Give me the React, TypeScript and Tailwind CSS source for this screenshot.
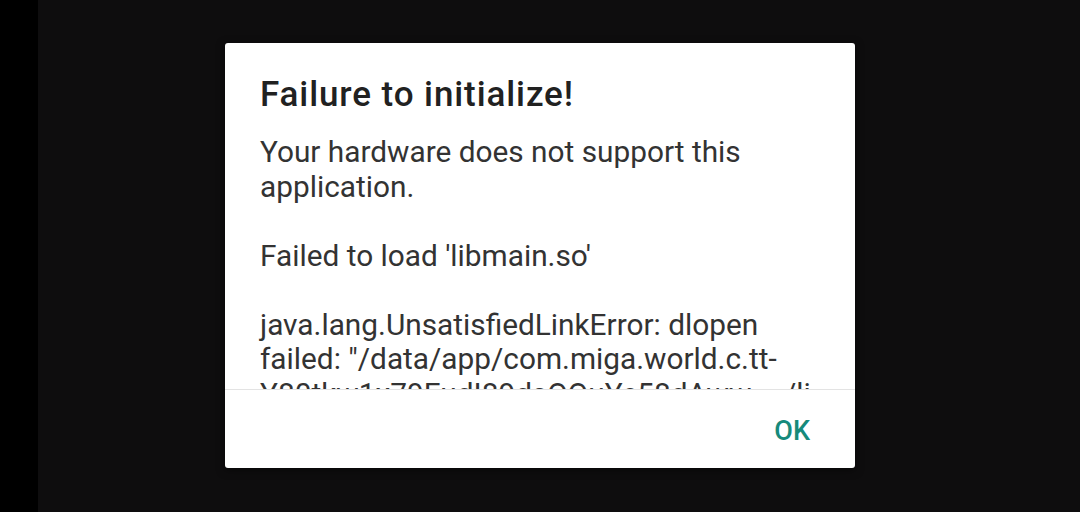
import React from 'react';

const App: React.FC = () => {
    return (
        <div className="flex w-[1080px] h-[512px] overflow-hidden bg-[#0e0d0e]" style={{ fontFamily: 'Roboto, "Noto Sans", sans-serif' }}>
            {/* left edge */}
            <div className="w-[38px] h-full bg-black shrink-0"></div>

            {/* Screen */}
            <div className="flex-1 pl-[187px] pt-[43px]">
                {/* Dialog */}
                <div className="w-[630px] h-[425px] bg-white rounded-[3px] flex flex-col shadow-[0_2px_8px_rgba(0,0,0,0.5)]">
                    {/* Scroll area */}
                    <div className="h-[346px] overflow-hidden px-[35px] pt-[32px]">
                        <h1 className="text-[35px] leading-[40px] font-medium tracking-[0.9px] text-[#212121]">
                            Failure to initialize!
                        </h1>
                        <div className="mt-[20px] text-[29.8px] leading-[34.5px] text-[#333333] break-words">
                            <p>Your hardware does not support this application.</p>
                            <p className="mt-[34.5px]">Failed to load 'libmain.so'</p>
                            <p className="mt-[34.5px]">
                                java.lang.UnsatisfiedLinkError: dlopen failed: "/data/app/com.miga.world.c.tt-Y80tkw1x79EudI89dsOQuYc58dAww==/lib/arm64/libmain.so" not found
                            </p>
                        </div>
                    </div>

                    {/* Buttons */}
                    <div className="flex-1 border-t border-[#e3e3e3] flex items-center justify-end pr-[45px] pt-[3px]">
                        <button className="text-[27px] leading-[32px] font-medium text-[#168a7b]">OK</button>
                    </div>
                </div>
            </div>
        </div>
    );
};

export default App;
